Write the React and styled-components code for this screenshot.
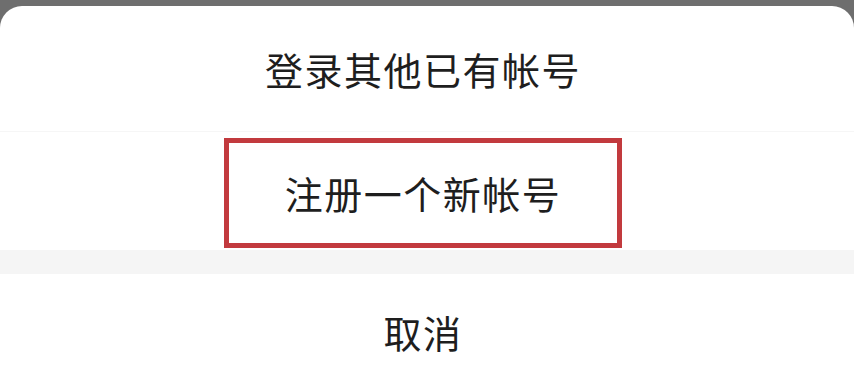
import styled, { createGlobalStyle } from 'styled-components';

const GlobalStyle = createGlobalStyle`
  html, body {
    margin: 0;
    padding: 0;
    background: #6e6e6e;
  }
  body {
    font-family: 'Noto Sans CJK SC', 'Noto Sans', sans-serif;
  }
`;

const Screen = styled.div`
  width: 854px;
  height: 389px;
  padding-top: 6px;
  box-sizing: border-box;
  background: #6e6e6e;
  overflow: hidden;
`;

const Sheet = styled.div`
  height: 100%;
  background: #fff;
  border-radius: 22px 22px 0 0;
  display: flex;
  flex-direction: column;
`;

const Option = styled.div`
  height: ${props => props.h}px;
  display: flex;
  align-items: ${props => props.top ? 'flex-start' : 'center'};
  justify-content: center;
  padding: ${props => props.top ? '6px' : '0'} 8px 0 0;
  border-bottom: ${props => props.divider ? '1px solid #f6f6f6' : 'none'};
  box-sizing: border-box;
`;

const Label = styled.span`
  font-size: 38px;
  line-height: 1;
  color: #1e1e1e;
  letter-spacing: 1.5px;
`;

const Highlight = styled.div`
  width: 398px;
  height: 110px;
  box-sizing: border-box;
  border: 5px solid #c23a3e;
  display: flex;
  align-items: center;
  justify-content: center;
`;

const Gap = styled.div`
  height: 24px;
  background: #f5f5f5;
`;

export default function App() {
  return (
    <>
      <GlobalStyle />
      <Screen>
        <Sheet>
          <Option h={126} divider>
            <Label>登录其他已有帐号</Label>
          </Option>
          <Option h={118} top>
            <Highlight>
              <Label>注册一个新帐号</Label>
            </Highlight>
          </Option>
          <Gap />
          <Option h={115}>
            <Label>取消</Label>
          </Option>
        </Sheet>
      </Screen>
    </>
  );
}
